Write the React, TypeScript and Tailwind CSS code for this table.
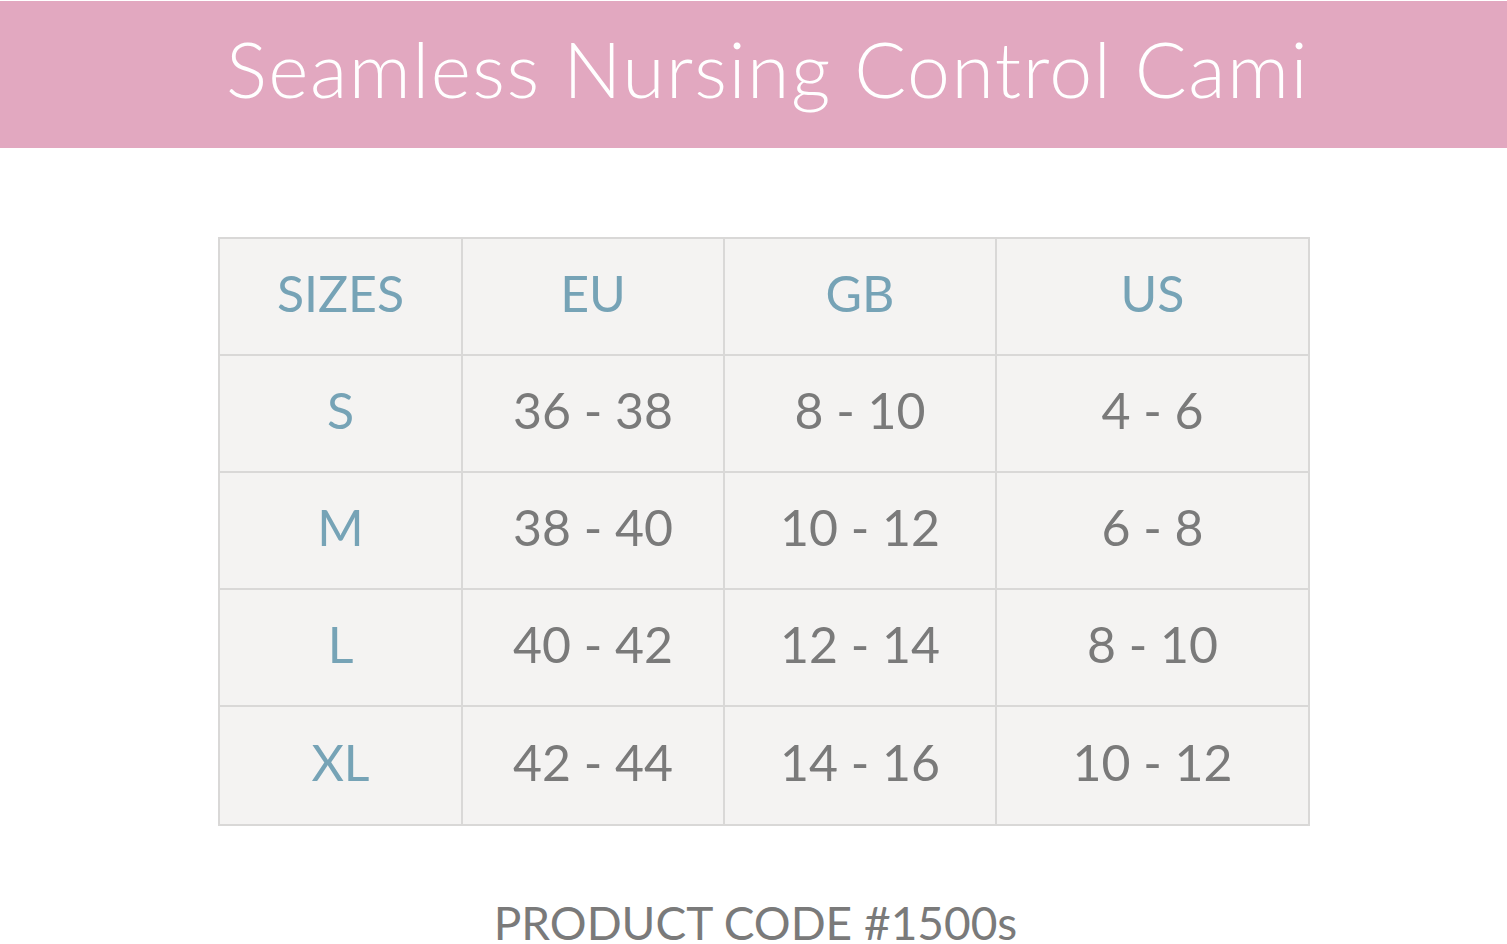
const rows = [
  ['S', '36 - 38', '8 - 10', '4 - 6'],
  ['M', '38 - 40', '10 - 12', '6 - 8'],
  ['L', '40 - 42', '12 - 14', '8 - 10'],
  ['XL', '42 - 44', '14 - 16', '10 - 12'],
]

const cols = ['w-[243px]', 'w-[262px]', 'w-[272px]', 'w-[311px]']

export default function App() {
  return (
    <div className="w-[1507px] h-[944px] bg-white overflow-hidden font-['Lato',sans-serif]">
      <div className="mt-px h-[147px] bg-[#e2a8c0] flex items-center justify-center pb-[12px] pl-[28px]">
        <h1 className="text-white text-[77px] font-light tracking-[1.5px] leading-none">Seamless Nursing Control Cami</h1>
      </div>

      <div className="ml-[218px] mt-[89px] w-[1092px] border-2 border-[#d9d8d7] bg-[#f4f3f2]">
        <div className="flex h-[117px] border-b-2 border-[#d9d8d7]">
          {['SIZES', 'EU', 'GB', 'US'].map((h, i) => (
            <div
              key={h}
              className={`${cols[i]} flex items-center justify-center pb-[6px] text-[50px] text-[#76a3b6] ${i < 3 ? 'border-r-2 border-[#d9d8d7]' : ''}`}
            >
              {h}
            </div>
          ))}
        </div>
        {rows.map((r, ri) => (
          <div key={r[0]} className={`flex h-[117px] ${ri < 3 ? 'border-b-2 border-[#d9d8d7]' : ''}`}>
            {r.map((c, i) => (
              <div
                key={i}
                className={`${cols[i]} flex items-center justify-center pb-[6px] text-[50px] ${i === 0 ? 'text-[#76a3b6]' : 'text-[#7a7a7a]'} ${i < 3 ? 'border-r-2 border-[#d9d8d7]' : ''}`}
              >
                {c}
              </div>
            ))}
          </div>
        ))}
      </div>

      <p className="mt-[74px] pl-[4px] text-center text-[46px] text-[#7a7a7a] leading-none">PRODUCT CODE #1500s</p>
    </div>
  )
}
